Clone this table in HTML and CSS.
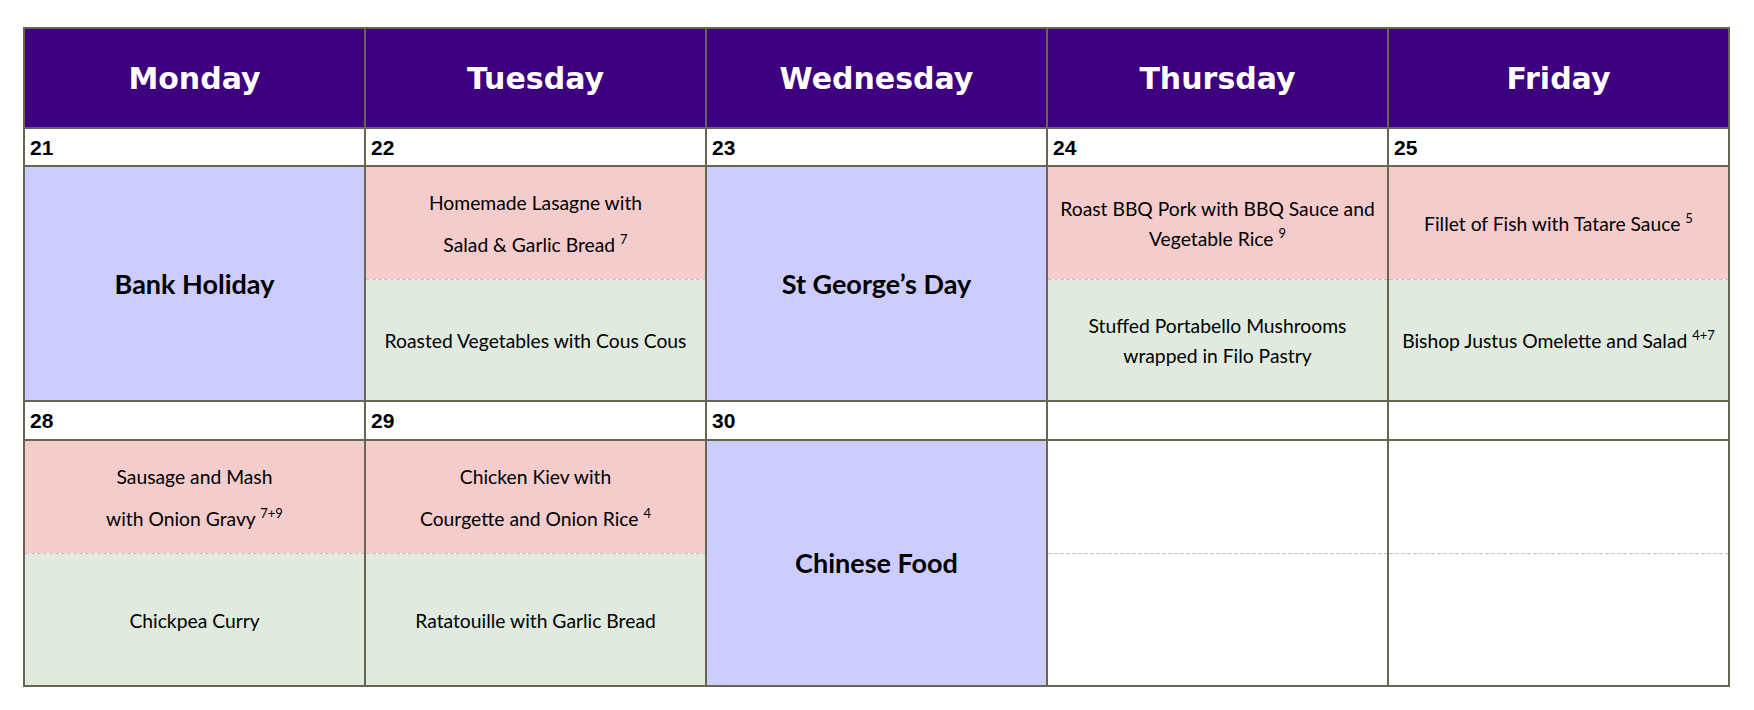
FILE: index.html
```html
<!DOCTYPE html>
<html lang="en">
<head>
<meta charset="utf-8">
<title>Lunch Menu</title>
<link rel="stylesheet" href="styles.css">
</head>
<body>
<div class="menu">
  <div class="day-head">Monday</div>
  <div class="day-head">Tuesday</div>
  <div class="day-head">Wednesday</div>
  <div class="day-head">Thursday</div>
  <div class="day-head">Friday</div>

  <div class="date">21</div>
  <div class="date">22</div>
  <div class="date">23</div>
  <div class="date">24</div>
  <div class="date">25</div>

  <div class="meals special"><p class="special-text">Bank Holiday</p></div>
  <div class="meals">
    <div class="lunch"><p>Homemade Lasagne with</p><p>Salad &amp; Garlic Bread <sup>7</sup></p></div>
    <div class="sep"></div>
    <div class="veg"><p>Roasted Vegetables with Cous Cous</p></div>
  </div>
  <div class="meals special"><p class="special-text">St George’s Day</p></div>
  <div class="meals">
    <div class="lunch"><p>Roast BBQ Pork with BBQ Sauce and<br>Vegetable Rice <sup>9</sup></p></div>
    <div class="sep"></div>
    <div class="veg"><p>Stuffed Portabello Mushrooms<br>wrapped in Filo Pastry</p></div>
  </div>
  <div class="meals">
    <div class="lunch"><p>Fillet of Fish with Tatare Sauce <sup>5</sup></p></div>
    <div class="sep"></div>
    <div class="veg"><p>Bishop Justus Omelette and Salad <sup>4+7</sup></p></div>
  </div>

  <div class="date">28</div>
  <div class="date">29</div>
  <div class="date">30</div>
  <div class="date"></div>
  <div class="date"></div>

  <div class="meals">
    <div class="lunch"><p>Sausage and Mash</p><p>with Onion Gravy <sup>7+9</sup></p></div>
    <div class="sep"></div>
    <div class="veg"><p>Chickpea Curry</p></div>
  </div>
  <div class="meals">
    <div class="lunch"><p>Chicken Kiev with</p><p>Courgette and Onion Rice <sup>4</sup></p></div>
    <div class="sep"></div>
    <div class="veg"><p>Ratatouille with Garlic Bread</p></div>
  </div>
  <div class="meals special"><p class="special-text">Chinese Food</p></div>
  <div class="meals empty">
    <div class="lunch"></div>
    <div class="sep"></div>
    <div class="veg"></div>
  </div>
  <div class="meals empty">
    <div class="lunch"></div>
    <div class="sep"></div>
    <div class="veg"></div>
  </div>
</div>
</body>
</html>
```
FILE: styles.css
```css
* {
  box-sizing: border-box;
}

html, body {
  margin: 0;
  padding: 0;
  background: #ffffff;
}

body {
  font-family: "Lato", "Liberation Sans", sans-serif;
  color: #000000;
}

.menu {
  display: grid;
  grid-template-columns: repeat(5, 1fr);
  grid-template-rows: 98px 36px 233px 37px 244px;
  gap: 2px;
  width: 1707px;
  margin: 27px 0 0 23px;
  border: 2px solid #666652;
  background: #666652;
}

.day-head {
  display: flex;
  align-items: center;
  justify-content: center;
  background: #3d007f;
  color: #ffffff;
  font-family: "DejaVu Sans", sans-serif;
  font-weight: bold;
  font-size: 30px;
}

.date {
  display: flex;
  align-items: center;
  padding: 1px 0 0 5px;
  background: #ffffff;
  font-family: "Liberation Sans", sans-serif;
  font-weight: bold;
  font-size: 21px;
}

.meals {
  display: flex;
  flex-direction: column;
  background: #ffffff;
}

.meals p {
  margin: 0;
  font-size: 19.3px;
  line-height: 30px;
  text-align: center;
}

.meals p + p {
  margin-top: 12px;
}

.lunch {
  height: 112px;
  display: flex;
  flex-direction: column;
  align-items: center;
  justify-content: center;
  background: #f4cccc;
  padding-top: 2px;
}

.veg {
  flex: 1;
  display: flex;
  flex-direction: column;
  align-items: center;
  justify-content: center;
  background: #e0eadf;
  padding-top: 2px;
}

.sep {
  height: 1px;
  background: repeating-linear-gradient(to right, #c4c4c4 0 4px, transparent 4px 6px);
}

.meals.empty .lunch,
.meals.empty .veg {
  background: #ffffff;
}

.meals.special {
  align-items: center;
  justify-content: center;
  background: #ccccff;
}

.meals p.special-text {
  font-weight: bold;
  font-size: 27px;
  line-height: 32px;
}

sup {
  font-size: 13px;
  line-height: 0;
  vertical-align: 8px;
}
```
